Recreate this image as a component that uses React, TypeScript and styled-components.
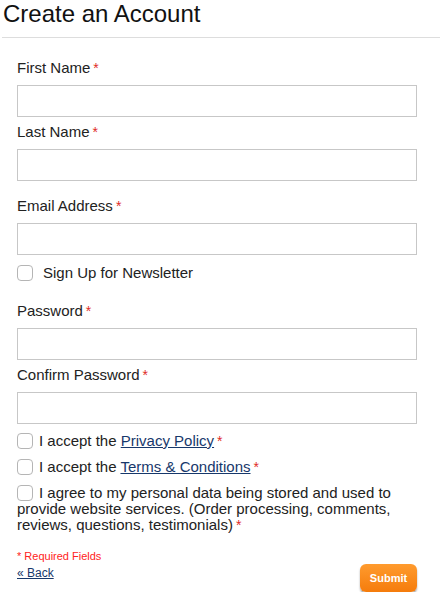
import React from "react";
import styled, {createGlobalStyle} from "styled-components";

const GlobalStyle = createGlobalStyle`
    body {
        margin: 0;
        background: #fff;
        font-family: "Liberation Sans", Arial, sans-serif;
        color: #222;
    }
`

type FieldProps = {
    label: string
    type?: string
}

const Field = ({label, type = "text"}: FieldProps) => {
    return (
        <StyledField>
            <StyledLabel>{label}<Star>*</Star></StyledLabel>
            <StyledInput type={type}/>
        </StyledField>
    )
}

export default function App() {
    return (
        <StyledPage>
            <GlobalStyle/>
            <StyledTitle>Create an Account</StyledTitle>

            <StyledForm>
                <StyledSection>
                    <Field label="First Name"/>
                    <Field label="Last Name"/>
                </StyledSection>

                <StyledSection $last={21}>
                    <Field label="Email Address" type="email"/>
                    <StyledNewsletter>
                        <StyledCheckbox type="checkbox"/>
                        <span>Sign Up for Newsletter</span>
                    </StyledNewsletter>
                </StyledSection>

                <StyledSection>
                    <Field label="Password" type="password"/>
                    <Field label="Confirm Password" type="password"/>
                </StyledSection>

                <StyledChecks>
                    <StyledCheckRow>
                        <StyledCheckbox type="checkbox"/>
                        I accept the <StyledLink href="#">Privacy Policy</StyledLink><Star>*</Star>
                    </StyledCheckRow>
                    <StyledCheckRow>
                        <StyledCheckbox type="checkbox"/>
                        I accept the <StyledLink href="#">Terms &amp; Conditions</StyledLink><Star>*</Star>
                    </StyledCheckRow>
                    <StyledAgree>
                        <StyledCheckbox type="checkbox"/>
                        I agree to my personal data being stored and used to provide website services. (Order
                        processing, comments, reviews, questions, testimonials)<Star>*</Star>
                    </StyledAgree>
                </StyledChecks>

                <StyledRequired>* Required Fields</StyledRequired>

                <StyledFooter>
                    <StyledBack href="#">« Back</StyledBack>
                    <StyledSubmit type="button">Submit</StyledSubmit>
                </StyledFooter>
            </StyledForm>
        </StyledPage>
    )
}

const StyledPage = styled.div`
    width: 440px;
`

const StyledTitle = styled.h1`
    margin: 0 0 0 2px;
    padding: 0 0 9px 1px;
    font-size: 24px;
    font-weight: 400;
    line-height: 28px;
    color: #111;
    border-bottom: 1px solid #ddd;
`

const StyledForm = styled.form`
    padding: 22px 23px 0 17px;
`

const StyledSection = styled.div<{ $last?: number }>`
    display: flex;
    flex-direction: column;
    gap: 7px;
    margin-bottom: ${props => props.$last ?? 17}px;
`

const StyledField = styled.div`
    display: flex;
    flex-direction: column;
    gap: 9px;
`

const StyledLabel = styled.label`
    font-size: 15px;
    line-height: 16px;
    color: #222;
`

const Star = styled.span`
    color: #e02b27;
    margin-left: 3px;
    font-size: 14px;
`

const StyledInput = styled.input`
    box-sizing: border-box;
    width: 400px;
    height: 32px;
    margin: 0;
    border: 1px solid #c7c7c7;
    border-radius: 0;
    background: #fff;
    font: inherit;
`

const StyledCheckbox = styled.input`
    appearance: none;
    box-sizing: border-box;
    width: 16px;
    height: 16px;
    margin: 0 6px 0 0;
    border: 1px solid #b5b5b5;
    border-radius: 4px;
    background: #fff;
    vertical-align: -3px;
`

const StyledNewsletter = styled.label`
    display: flex;
    align-items: center;
    gap: 4px;
    margin-top: 2px;
    font-size: 15px;
    line-height: 18px;
`

const StyledChecks = styled.div`
    display: flex;
    flex-direction: column;
    gap: 8px;
    margin-top: -9px;
`

const StyledCheckRow = styled.label`
    display: block;
    font-size: 15px;
    line-height: 18px;
`

const StyledAgree = styled.label`
    display: block;
    margin-top: 1px;
    font-size: 15px;
    line-height: 16px;
`

const StyledLink = styled.a`
    color: #17386b;
    text-decoration: underline;
`

const StyledRequired = styled.div`
    margin-top: 16px;
    font-size: 11px;
    line-height: 14px;
    color: #f22;
`

const StyledFooter = styled.div`
    display: flex;
    justify-content: space-between;
    align-items: flex-start;
`

const StyledBack = styled.a`
    margin-top: 3px;
    font-size: 12px;
    color: #17386b;
    text-decoration: underline;
`

const StyledSubmit = styled.button`
    margin-top: 1px;
    width: 57px;
    height: 28px;
    border: none;
    border-radius: 6px;
    background: linear-gradient(#ff9b2e, #f57c0c);
    box-shadow: 0 2px 2px rgba(0, 0, 0, 0.35);
    color: #fff;
    font-family: "Liberation Sans", Arial, sans-serif;
    font-weight: 700;
    font-size: 11px;
`
